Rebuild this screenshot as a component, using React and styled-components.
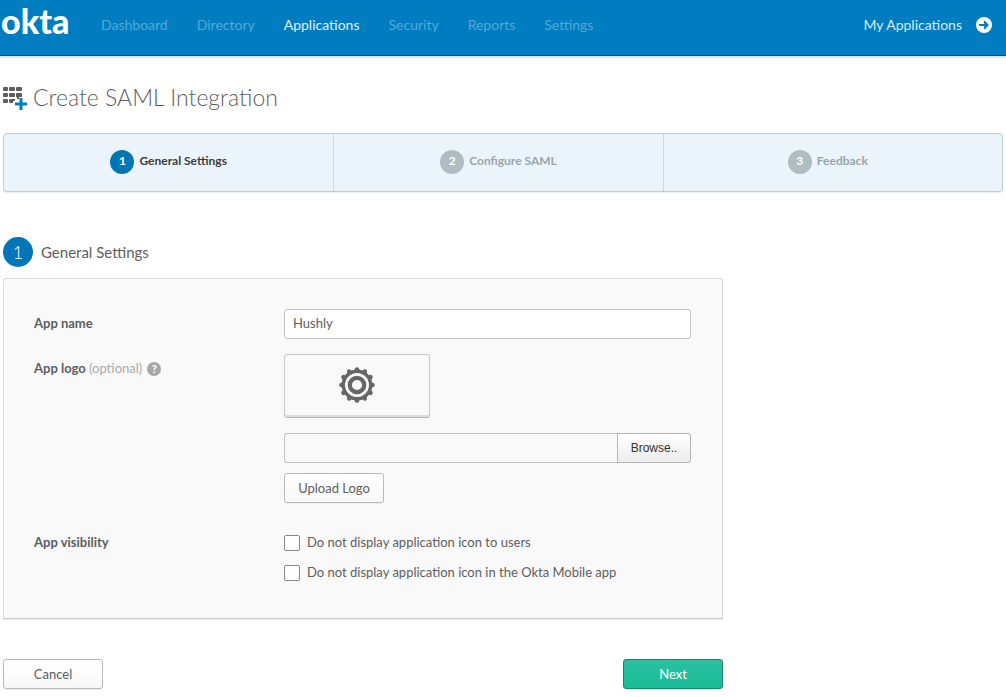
import { useState } from "react";
import styled, { createGlobalStyle, css } from "styled-components";

const GlobalStyle = createGlobalStyle`
  *, *::before, *::after {
    box-sizing: border-box;
  }

  body {
    margin: 0;
    background: #fff;
    color: #5e5e5e;
    font-family: Lato, "Liberation Sans", sans-serif;
    font-size: 13px;
    line-height: 20px;
  }

  button, input {
    font: inherit;
    color: inherit;
    margin: 0;
  }
`;

const Header = styled.header`
  display: flex;
  align-items: center;
  height: 56px;
  padding: 0 14px 6px 1px;
  background: #007dc1;
  border-bottom: 1px solid #00527f;
  box-shadow: 0 2px 0 #e3e3e3;
`;

const Logo = styled.a`
  width: 70px;
  padding-bottom: 8px;
  color: #fff;
  font-size: 34px;
  font-weight: 900;
  line-height: 32px;
  text-decoration: none;
`;

const Nav = styled.nav`
  flex: 1;
  display: flex;
  gap: 29px;
  margin-left: 30px;
`;

const NavLink = styled.a`
  color: ${(p) => (p.$active ? "#e0eff8" : "#55a8d8")};
  font-size: 14px;
  line-height: 18px;
  text-decoration: none;
`;

const MyApps = styled.a`
  display: flex;
  align-items: center;
  gap: 14px;
  color: #d9ecf6;
  font-size: 14px;
  line-height: 18px;
  text-decoration: none;
`;

const Main = styled.main`
  padding: 27px 3px 8px;
`;

const TitleRow = styled.div`
  display: flex;
  align-items: center;
  gap: 6px;
`;

const Title = styled.h1`
  margin: 0;
  padding-bottom: 2px;
  color: #5e5e5e;
  font-size: 23px;
  font-weight: 300;
  line-height: 28px;
`;

const Steps = styled.ol`
  display: grid;
  grid-template-columns: repeat(3, 33%);
  margin: 20px 0 0;
  padding: 0;
  list-style: none;
  background: #ebf4fb;
  border: 1px solid #bbcdd5;
  border-radius: 4px;
  box-shadow: 0 1px 1px #e8eef1;
`;

const Step = styled.li`
  display: flex;
  align-items: center;
  justify-content: center;
  gap: 5px;
  height: 57px;
  padding-bottom: 2px;
  color: ${(p) => (p.$active ? "#3c3c3c" : "#9aa5aa")};
  font-size: 12px;
  font-weight: 700;
  line-height: 18px;

  & + & {
    border-left: 1px solid #c9d9e0;
  }
`;

const Badge = styled.span`
  display: flex;
  align-items: center;
  justify-content: center;
  width: ${(p) => (p.$large ? "30px" : "24px")};
  height: ${(p) => (p.$large ? "30px" : "24px")};
  padding-bottom: 1px;
  border-radius: 50%;
  background: ${(p) => (p.$muted ? "#afbcc1" : "#0076b6")};
  color: #fff;
  font-size: ${(p) => (p.$large ? "18px" : "12px")};
  font-weight: ${(p) => (p.$large ? 300 : 700)};
`;

const StepName = styled.span`
  padding-bottom: 2px;
`;

const Content = styled.form`
  max-width: 720px;
`;

const SectionTitle = styled.h2`
  display: flex;
  align-items: center;
  gap: 8px;
  margin: 45px 0 11px;
  font-size: 15px;
  font-weight: 400;
`;

const Panel = styled.section`
  display: flex;
  flex-direction: column;
  gap: 15px;
  padding: 30px 31px 30px 30px;
  background: #f9f9f9;
  border: 1px solid #dadada;
  border-bottom-color: #c8c8c8;
  border-radius: 3px 3px 0 0;
  box-shadow: 0 1px 0 #eee;
`;

const Row = styled.div`
  display: grid;
  grid-template-columns: 250px 1fr;
  align-items: start;
`;

const LabelCell = styled.div`
  display: flex;
  align-items: center;
  gap: 5px;
  height: 30px;
`;

const labelText = css`
  padding-bottom: 2px;
  font-size: 13px;
  font-weight: 700;
`;

const Label = styled.label`
  ${labelText}
`;

const GroupLabel = styled.span`
  ${labelText}
`;

const Optional = styled.span`
  color: #aaa;
  font-weight: 400;
`;

const HelpButton = styled.button`
  width: 14px;
  height: 14px;
  padding: 0;
  border: 0;
  border-radius: 50%;
  background: #a7a7a7;
  color: #fff;
  font-size: 11px;
  font-weight: 900;
  line-height: 14px;
`;

const Fields = styled.div`
  display: flex;
  flex-direction: column;
  align-items: flex-start;
`;

const TextInput = styled.input`
  width: 100%;
  height: 30px;
  padding: 0 8px 2px;
  background: #fff;
  border: 1px solid #c3c3c3;
  border-radius: 3px;
`;

const LogoPreview = styled.div`
  display: flex;
  align-items: center;
  justify-content: center;
  width: 146px;
  height: 64px;
  padding-bottom: 2px;
  background: #f9f9f9;
  border: 1px solid #c8c8c8;
  border-bottom-color: #b8b8b8;
  border-radius: 3px;
  box-shadow: inset 0 -2px 0 #dedede;
`;

const FilePicker = styled.div`
  display: flex;
  width: 100%;
  margin: 15px 0 10px;
`;

const FileName = styled(TextInput)`
  flex: 1;
  min-width: 0;
  background: #f9f9f9;
  border-right: 0;
  border-radius: 3px 0 0 3px;
`;

const BrowseButton = styled.button`
  width: 74px;
  height: 30px;
  padding: 0;
  background: linear-gradient(#fff, #ececec);
  border: 1px solid #b4b4b4;
  border-radius: 0 3px 3px 0;
  color: #333;
  font-family: "Liberation Sans", sans-serif;
  font-size: 12px;
`;

const Button = styled.button`
  width: 100px;
  height: 30px;
  padding: 0;
  background: ${(p) =>
    p.$primary ? "linear-gradient(#2bc0a0, #1abc98)" : "linear-gradient(#fff, #f8f8f8)"};
  border: 1px solid ${(p) => (p.$primary ? "#13886b" : "#b9b9b9")};
  border-radius: 3px;
  box-shadow: 0 1px 0 #eee;
  color: ${(p) => (p.$primary ? "#fff" : "#5e5e5e")};
`;

const CheckRow = styled.label`
  display: flex;
  align-items: center;
  gap: 7px;
  height: 30px;
`;

const CheckText = styled.span`
  padding-bottom: 2px;
`;

const Checkbox = styled.input`
  appearance: none;
  width: 16px;
  height: 16px;
  background: #fff;
  border: 1px solid #888;
  border-radius: 2px;

  &:checked {
    background: #007dc1;
  }
`;

const Visibility = styled(Row)`
  margin-top: 10px;
`;

const Actions = styled.div`
  display: flex;
  justify-content: space-between;
  margin-top: 40px;
`;

const navItems = ["Dashboard", "Directory", "Applications", "Security", "Reports", "Settings"];
const steps = ["General Settings", "Configure SAML", "Feedback"];
const teeth = Array.from({ length: 12 }, (_, i) => i * 30);

function ArrowIcon() {
  return (
    <svg width="16" height="16" viewBox="0 0 16 16" aria-hidden="true">
      <circle cx="8" cy="8" r="8" fill="#fff" />
      <path d="M3 7h5.4L7.6 4.6l1-1L13 8l-4.400 4.400-1-1L8.400 9H3z" fill="#007dc1" />
    </svg>
  );
}

function AddAppIcon() {
  return (
    <svg width="24" height="24" viewBox="0 0 24 24" aria-hidden="true">
      <g fill="#5e5e5e">
        <rect x="0" y="1" width="5" height="4" rx="1" />
        <rect x="6" y="1" width="6" height="4" rx="1" />
        <rect x="13" y="1" width="6" height="4" rx="1" />
        <rect x="0" y="7" width="5" height="4" rx="1" />
        <rect x="6" y="7" width="6" height="4" rx="1" />
        <path d="M13 8q0-1 1-1h4q1 0 1 1v3h-3v2h-2v-2h-1z" />
        <rect x="0" y="13" width="5" height="4" rx="1" />
        <path d="M6 14q0-1 1-1h5v2h-2v2H7q-1 0-1-1z" />
      </g>
      <path d="M16.500 12h3v4.500H24v3h-4.500V24h-3v-4.500H12v-3h4.500z" fill="#007dc1" />
    </svg>
  );
}

function GearIcon() {
  return (
    <svg width="36" height="36" viewBox="0 0 36 36" aria-hidden="true">
      <g fill="#666">
        {teeth.map((angle) => (
          <path
            key={angle}
            d="M14.500 4Q15.800 3.400 15.900 1.800Q16 .2 18 .2T20.100 1.800Q20.200 3.400 21.500 4z"
            transform={`rotate(${angle} 18 18)`}
          />
        ))}
      </g>
      <circle cx="18" cy="18" r="13.700" fill="none" stroke="#666" strokeWidth="3.400" />
      <circle cx="18" cy="18" r="7.200" fill="none" stroke="#666" strokeWidth="4.200" />
    </svg>
  );
}

export default function App() {
  const [appName, setAppName] = useState("Hushly");

  return (
    <>
      <GlobalStyle />
      <Header>
        <Logo href="#">okta</Logo>
        <Nav>
          {navItems.map((item) => (
            <NavLink key={item} href="#" $active={item === "Applications"}>
              {item}
            </NavLink>
          ))}
        </Nav>
        <MyApps href="#">
          My Applications
          <ArrowIcon />
        </MyApps>
      </Header>

      <Main>
        <TitleRow>
          <AddAppIcon />
          <Title>Create SAML Integration</Title>
        </TitleRow>

        <Steps>
          {steps.map((step, i) => (
            <Step key={step} $active={i === 0}>
              <Badge $muted={i !== 0}>{i + 1}</Badge>
              <StepName>{step}</StepName>
            </Step>
          ))}
        </Steps>

        <Content onSubmit={(e) => e.preventDefault()}>
          <SectionTitle>
            <Badge $large>1</Badge>
            General Settings
          </SectionTitle>

          <Panel>
            <Row>
              <LabelCell>
                <Label htmlFor="app-name">App name</Label>
              </LabelCell>
              <TextInput
                id="app-name"
                value={appName}
                onChange={(e) => setAppName(e.target.value)}
              />
            </Row>

            <Row>
              <LabelCell>
                <Label htmlFor="app-logo">
                  App logo <Optional>(optional)</Optional>
                </Label>
                <HelpButton type="button">?</HelpButton>
              </LabelCell>
              <Fields>
                <LogoPreview>
                  <GearIcon />
                </LogoPreview>
                <FilePicker>
                  <FileName id="app-logo" readOnly />
                  <BrowseButton type="button">Browse..</BrowseButton>
                </FilePicker>
                <Button type="button">Upload Logo</Button>
              </Fields>
            </Row>

            <Visibility role="group" aria-labelledby="visibility">
              <LabelCell>
                <GroupLabel id="visibility">App visibility</GroupLabel>
              </LabelCell>
              <Fields>
                <CheckRow>
                  <Checkbox type="checkbox" />
                  <CheckText>Do not display application icon to users</CheckText>
                </CheckRow>
                <CheckRow>
                  <Checkbox type="checkbox" />
                  <CheckText>Do not display application icon in the Okta Mobile app</CheckText>
                </CheckRow>
              </Fields>
            </Visibility>
          </Panel>

          <Actions>
            <Button type="button">Cancel</Button>
            <Button type="submit" $primary>
              Next
            </Button>
          </Actions>
        </Content>
      </Main>
    </>
  );
}
